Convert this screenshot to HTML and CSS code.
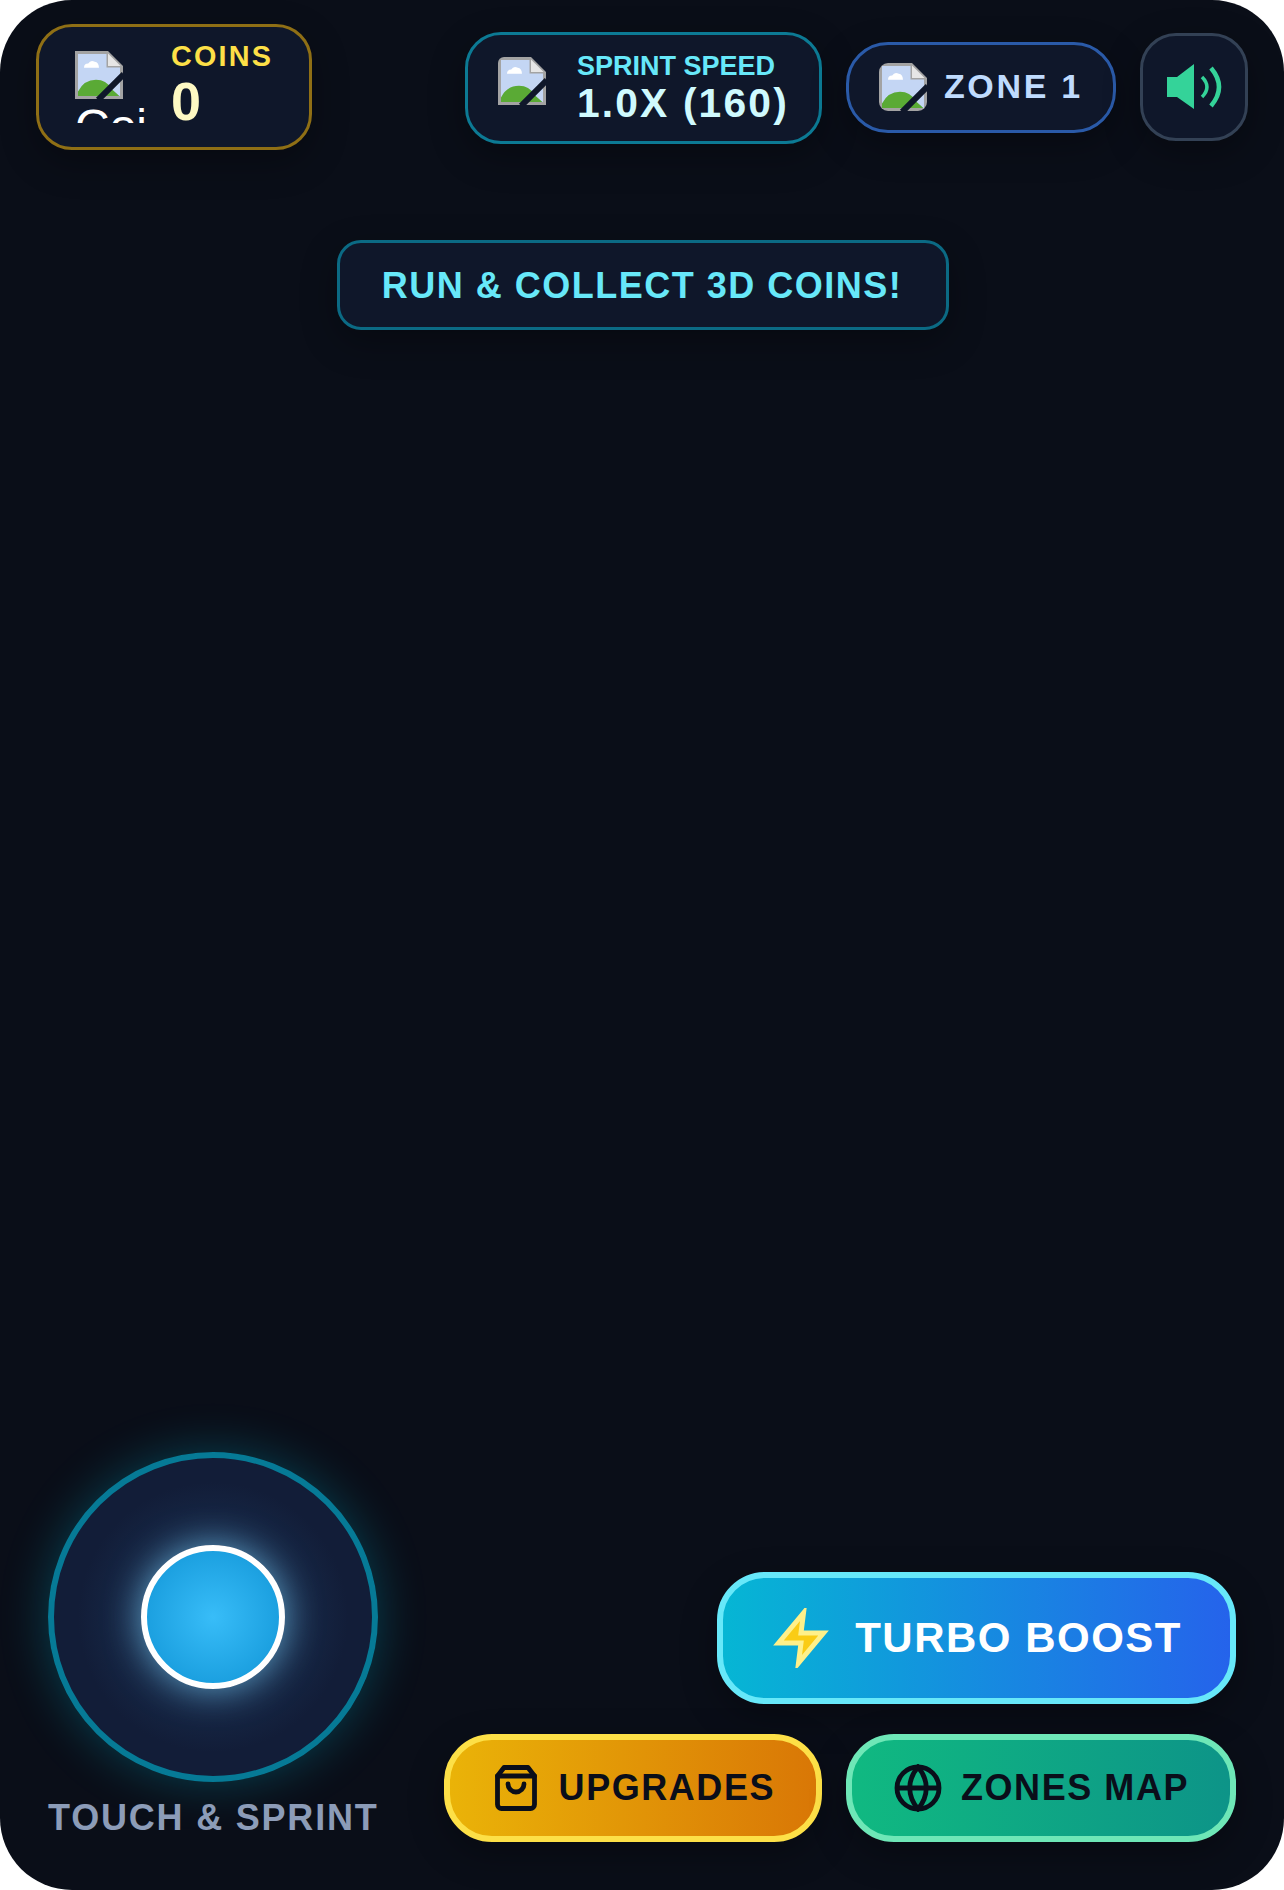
FILE: index.html
```html
<!DOCTYPE html>
<html lang="en">
<head>
    <meta charset="UTF-8">
    <meta name="viewport" content="width=device-width, initial-scale=1.0">
    <title>Sprint Runner</title>
    <link rel="stylesheet" href="styles.css">
</head>
<body>
    <svg class="sprite" width="0" height="0">
        <symbol id="brokenImage" viewBox="0 0 16 16">
            <path d="M0 0H11L16 5V16H0Z" fill="#a3a3a3"/>
            <path d="M1 1H10.5V5.5H15V15H1Z" fill="#c4d6f4"/>
            <path d="M11 0.8L15.2 5H11Z" fill="#e6e6e6"/>
            <path d="M3 5.6Q3 4.2 4.4 4.2Q5.2 2.8 6.6 3.6Q7.9 3.8 8 5.6Z" fill="#fff"/>
            <path d="M1 15V13.5Q3 9.6 7 9.6Q10.5 9.6 12 12.5L14.8 15Z" fill="#5aaa35"/>
            <path d="M7.7 16.3L16.3 7.7" stroke="#0f172a" stroke-width="2" fill="none"/>
        </symbol>
    </svg>

    <div class="game">
        <div class="hud">
            <div class="pill pill-coins">
                <div class="broken-img">
                    <svg class="broken-icon"><use href="#brokenImage"/></svg>
                    <span class="alt-text">Coin</span>
                </div>
                <div class="stat">
                    <div class="stat-label coins-label">COINS</div>
                    <div class="stat-value coins-value">0</div>
                </div>
            </div>

            <div class="hud-right">
                <div class="pill pill-speed">
                    <svg class="broken-icon speed-icon"><use href="#brokenImage"/></svg>
                    <div class="stat">
                        <div class="stat-label speed-label">SPRINT SPEED</div>
                        <div class="stat-value speed-value">1.0X (160)</div>
                    </div>
                </div>

                <div class="pill pill-zone">
                    <svg class="broken-icon zone-icon"><use href="#brokenImage"/></svg>
                    <span class="zone-name">ZONE 1</span>
                </div>

                <button class="sound-button">
                    <svg width="60" height="60" viewBox="0 0 60 60">
                        <path d="M3 20H13L30 7V52L13 40H3Z" fill="#34d399"/>
                        <path d="M38 20Q48 30 38 40" fill="none" stroke="#34d399" stroke-width="3.5"/>
                        <path d="M47 11Q63 30 47 49" fill="none" stroke="#34d399" stroke-width="4.5"/>
                    </svg>
                </button>
            </div>
        </div>

        <div class="banner">RUN &amp; COLLECT 3D COINS!</div>

        <div class="controls">
            <div class="stick-column">
                <div class="stick">
                    <div class="knob"></div>
                </div>
                <div class="stick-label">TOUCH &amp; SPRINT</div>
            </div>

            <div class="actions">
                <button class="action turbo">
                    <svg width="60" height="60" viewBox="0 0 24 24">
                        <path d="M13 2L3 14H12L11 22L21 10H12Z" fill="#facc15" stroke="#fef08a" stroke-width="2"/>
                    </svg>
                    TURBO BOOST
                </button>
                <div class="action-row">
                    <button class="action upgrades">
                        <svg width="48" height="48" viewBox="0 0 24 24" fill="none" stroke="#0a0e1a" stroke-width="2.4" stroke-linejoin="round" stroke-linecap="round">
                            <path d="M6 1.75H18L21.25 6V20.25A2 2 0 0 1 19.25 22.25H4.75A2 2 0 0 1 2.75 20.25V6Z"/>
                            <path d="M2.75 6H21.25"/>
                            <path d="M8 10A4 4 0 0 0 16 10"/>
                        </svg>
                        UPGRADES
                    </button>
                    <button class="action zones">
                        <svg width="48" height="48" viewBox="0 0 24 24" fill="none" stroke="#0a0e1a" stroke-width="2.4">
                            <circle cx="12" cy="12" r="10.5"/>
                            <path d="M12 1.5C6.5 8 6.5 16 12 22.5C17.5 16 17.5 8 12 1.5Z"/>
                            <path d="M1.5 12H22.5"/>
                        </svg>
                        ZONES MAP
                    </button>
                </div>
            </div>
        </div>
    </div>
</body>
</html>
```

FILE: styles.css
```css
* {
    box-sizing: border-box;
}

body {
    margin: 0;
    background-color: #fff;
    font-family: "Liberation Sans", Arial, sans-serif;
}

.sprite {
    position: absolute;
}

.game {
    width: 1284px;
    height: 1890px;
    display: flex;
    flex-direction: column;
    background-color: #0a0e18;
    border-radius: 72px;
    overflow: hidden;
}

/* Top bar */
.hud {
    display: flex;
    justify-content: space-between;
    align-items: center;
    padding: 24px 36px 0 36px;
}

.hud-right {
    display: flex;
    align-items: center;
    gap: 24px;
}

.pill {
    display: flex;
    align-items: center;
    background-color: #0f172a;
    border: 3px solid;
    box-shadow: 0 12px 36px rgba(0, 0, 0, 0.3);
}

.pill-coins {
    gap: 24px;
    padding: 16px 36px;
    border-color: #8f6f15;
    border-radius: 36px;
}

.pill-speed {
    gap: 31px;
    margin-top: 2px;
    padding: 17px 30px 15px;
    border-color: #0c7a94;
    border-radius: 36px;
}

.pill-zone {
    gap: 17px;
    padding: 17.5px 30px;
    border-color: #2a5aa8;
    border-radius: 42px;
}

.broken-img {
    width: 72px;
    height: 72px;
    overflow: hidden;
    color: #fff;
    font-size: 48px;
    line-height: 55px;
    white-space: nowrap;
}

.broken-icon {
    display: block;
    width: 48px;
    height: 48px;
    flex-shrink: 0;
}

.speed-icon {
    margin-bottom: 16px;
    border-top-left-radius: 6px;
}

.zone-icon {
    border-radius: 9px;
}

.alt-text {
    display: block;
}

.stat-label {
    line-height: 28px;
    font-weight: bold;
}

.stat-value {
    font-weight: bold;
}

.coins-label {
    margin-top: -1px;
    color: #fde047;
    font-size: 28.8px;
    letter-spacing: 2.16px;
}

.coins-value {
    margin-top: 1px;
    color: #fef9c3;
    font-size: 54px;
    line-height: 60px;
}

.speed-label {
    color: #67e8f9;
    font-size: 27px;
}

.speed-value {
    color: #cffafe;
    font-size: 40.8px;
    line-height: 46px;
    letter-spacing: 2.15px;
}

.zone-name {
    margin-bottom: 2px;
    color: #bfdbfe;
    font-size: 34px;
    line-height: 48px;
    font-weight: bold;
    letter-spacing: 2.72px;
}

.sound-button {
    width: 108px;
    height: 108px;
    display: flex;
    justify-content: center;
    align-items: center;
    padding: 0;
    background-color: #0f172a;
    border: 3px solid #334155;
    border-radius: 36px;
    box-shadow: 0 12px 36px rgba(0, 0, 0, 0.3);
}

.banner {
    align-self: center;
    margin: 90px 0 0 2px;
    padding: 22px 44px 21px 42px;
    background-color: #0f172a;
    border: 3px solid #0b6a84;
    border-radius: 24px;
    color: #67e8f9;
    font-size: 36px;
    line-height: 41px;
    font-weight: bold;
    letter-spacing: 1.5px;
    box-shadow: 0 12px 36px rgba(0, 0, 0, 0.3);
}

/* Bottom controls */
.controls {
    display: flex;
    justify-content: space-between;
    align-items: flex-end;
    margin-top: auto;
    padding: 0 48px 48px;
}

.stick-column {
    display: flex;
    flex-direction: column;
    align-items: center;
    gap: 18px;
    padding-bottom: 6px;
}

.stick {
    width: 330px;
    height: 330px;
    display: flex;
    justify-content: center;
    align-items: center;
    background: radial-gradient(circle, #1e3a5f 0%, #121d38 60%);
    border: 6px solid #067a96;
    border-radius: 50%;
    box-shadow: 0 0 48px rgba(6, 182, 212, 0.3);
}

.knob {
    width: 144px;
    height: 144px;
    background: radial-gradient(circle, #38bdf8 0%, #1094d6 100%);
    border: 6px solid #fff;
    border-radius: 50%;
    box-shadow: 0 0 36px rgba(125, 211, 252, 0.7);
}

.stick-label {
    color: #8c9cb8;
    font-size: 36px;
    line-height: 36px;
    font-weight: bold;
    letter-spacing: 1.8px;
}

.actions {
    display: flex;
    flex-direction: column;
    align-items: flex-end;
    gap: 30px;
}

.action-row {
    display: flex;
    gap: 24px;
}

.action {
    display: flex;
    align-items: center;
    font-family: inherit;
    font-weight: bold;
    border: 6px solid;
    box-shadow: 0 12px 36px rgba(0, 0, 0, 0.3);
}

.turbo {
    gap: 24px;
    padding: 30px 48px;
    color: #fff;
    font-size: 42px;
    letter-spacing: 1.5px;
    background: linear-gradient(90deg, #06b6d4, #2563eb);
    border-color: #67e8f9;
    border-radius: 48px;
}

.upgrades,
.zones {
    gap: 19px;
    padding: 24px 41px 24px 42px;
    color: #0a0e1a;
    font-size: 36px;
    letter-spacing: 1.55px;
    border-radius: 48px;
}

.upgrades {
    background: linear-gradient(90deg, #eab308, #d97706);
    border-color: #fde047;
}

.zones {
    background: linear-gradient(90deg, #10b981, #0d9488);
    border-color: #6ee7b7;
}
```
